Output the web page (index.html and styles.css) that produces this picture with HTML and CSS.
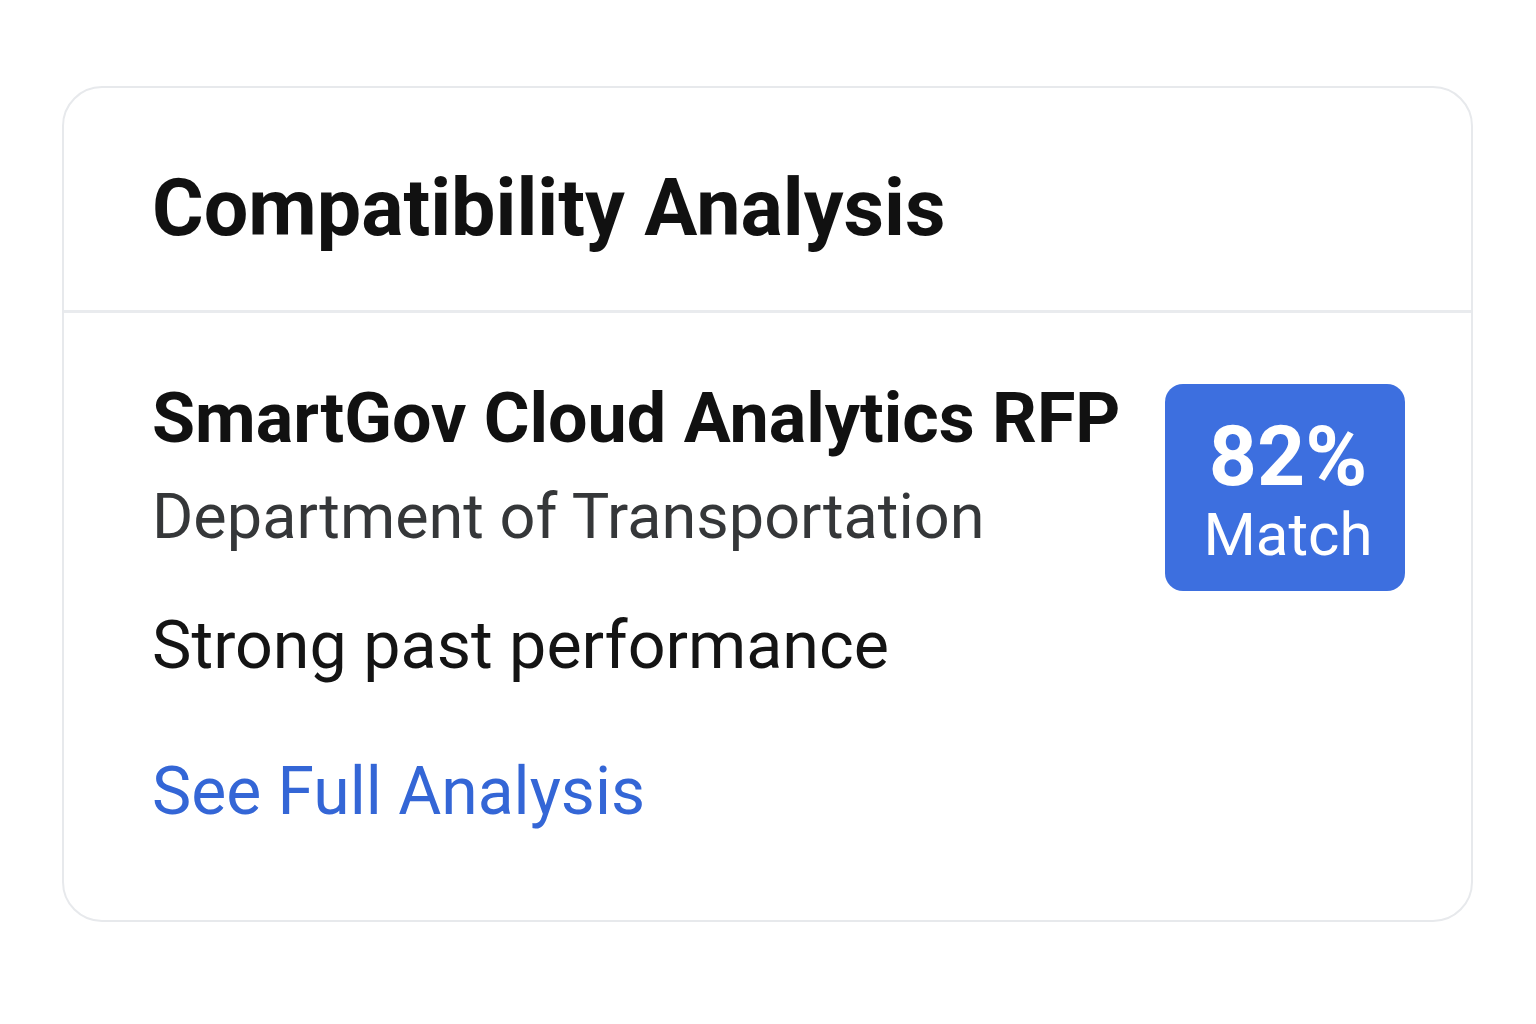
FILE: index.html
```html
<!DOCTYPE html>
<html lang="en">
<head>
<meta charset="utf-8">
<title>Compatibility Analysis</title>
<link rel="stylesheet" href="styles.css">
</head>
<body>
<div class="page">
  <section class="card">
    <header class="card-header">
      <h1 class="card-title">Compatibility Analysis</h1>
    </header>
    <div class="card-body">
      <div class="rfp-row">
        <div class="rfp-info">
          <h2 class="rfp-name">SmartGov Cloud Analytics RFP</h2>
          <div class="rfp-agency">Department of Transportation</div>
        </div>
        <div class="match-badge">
          <div class="match-value">82%</div>
          <div class="match-label">Match</div>
        </div>
      </div>
      <p class="rfp-note">Strong past performance</p>
      <a class="rfp-link" href="#">See Full Analysis</a>
    </div>
  </section>
</div>
</body>
</html>
```
FILE: styles.css
```css
html, body {
  margin: 0;
  padding: 0;
  background: #ffffff;
}
body {
  font-family: Roboto, "Noto Sans", "Liberation Sans", sans-serif;
  color: #111111;
}
.page {
  padding: 86px 63px 0 62px;
}
.card {
  width: 1407px;
  height: 832px;
  border: 2px solid #e7e9ec;
  border-radius: 40px;
  display: flex;
  flex-direction: column;
  overflow: hidden;
}
.card-header {
  padding: 80px 88px 62px;
  border-bottom: 3px solid #e9ebee;
}
.card-title {
  margin: 0;
  font-size: 79px;
  line-height: 80px;
  font-weight: 700;
  color: #111111;
}
.card-body {
  padding: 65px 66px 0 88px;
  display: flex;
  flex-direction: column;
  align-items: flex-start;
}
.rfp-row {
  align-self: stretch;
  display: flex;
  justify-content: space-between;
  align-items: flex-start;
}
.rfp-info {
  display: flex;
  flex-direction: column;
  gap: 23px;
}
.rfp-name {
  margin: 0;
  font-size: 70px;
  line-height: 80px;
  font-weight: 700;
  color: #111111;
}
.rfp-agency {
  font-size: 63px;
  line-height: 72px;
  font-weight: 400;
  color: #353739;
}
.match-badge {
  margin-top: 6px;
  width: 240px;
  height: 207px;
  box-sizing: border-box;
  padding-top: 31px;
  padding-left: 6px;
  background: #3d6fdf;
  border-radius: 18px;
  color: #ffffff;
  display: flex;
  flex-direction: column;
  align-items: center;
}
.match-value {
  font-size: 84px;
  line-height: 84px;
  font-weight: 700;
}
.match-label {
  margin-top: 4px;
  font-size: 60px;
  line-height: 64px;
  font-weight: 400;
}
.rfp-note {
  margin: 16px 0 0;
  font-size: 66.4px;
  line-height: 76px;
  color: #141414;
}
.rfp-link {
  margin-top: 71px;
  font-size: 66px;
  line-height: 76px;
  color: #3466d6;
  text-decoration: none;
}
```
